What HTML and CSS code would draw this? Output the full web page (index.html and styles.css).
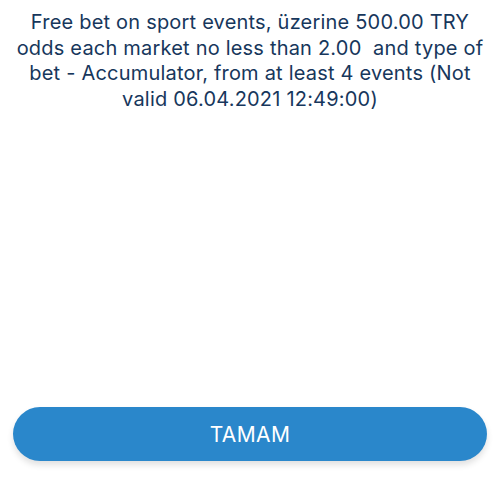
FILE: index.html
```html
<!DOCTYPE html>
<html lang="en">
<head>
    <meta charset="UTF-8">
    <meta name="viewport" content="width=device-width, initial-scale=1.0">
    <title>Free bet</title>
    <link rel="stylesheet" href="styles.css">
</head>
<body>
    <div class="sheet">
        <p class="bonus-text">Free bet on sport events, üzerine 500.00 TRY<br>odds each market no less than 2.00&nbsp; and type of<br>bet - Accumulator, from at least 4 events (Not<br>valid 06.04.2021 12:49:00)</p>
        <button type="button" class="btn">TAMAM</button>
    </div>
</body>
</html>
```

FILE: styles.css
```css
body {
    font-family: 'Inter', 'Open Sans', sans-serif;
    background-color: #ffffff;
    margin: 0;
}

.sheet {
    display: flex;
    flex-direction: column;
    justify-content: space-between;
    height: 489px;
    padding: 0 13px 28px;
    box-sizing: border-box;
}

.bonus-text {
    margin: 10px -8px 0;
    color: #17375c;
    font-size: 20px;
    line-height: 25.5px;
    letter-spacing: 0.2px;
    text-align: center;
    white-space: nowrap;
}

.btn {
    width: 100%;
    height: 54px;
    border: none;
    border-radius: 27px;
    background-color: #2a87cb;
    color: white;
    font-family: inherit;
    font-size: 21px;
    letter-spacing: 0.4px;
    padding-top: 1px;
    box-shadow: 0 4px 6px rgba(0, 0, 0, 0.12);
    cursor: pointer;
}
```
